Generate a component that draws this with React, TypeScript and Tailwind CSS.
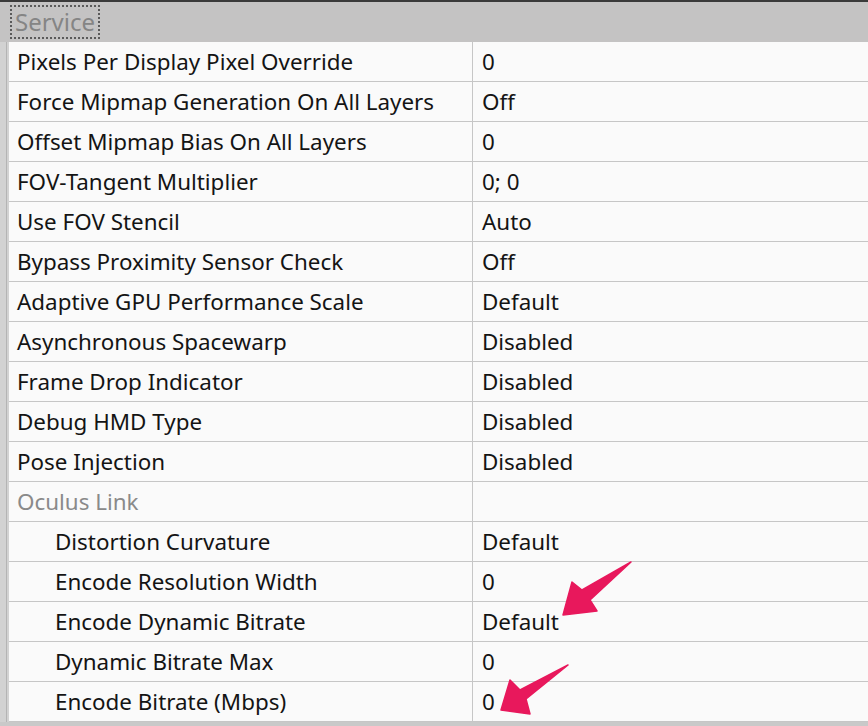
import React from 'react';

type Row = {
  label: string;
  value: string;
  indent?: boolean;
  category?: boolean;
};

const rows: Row[] = [
  { label: 'Pixels Per Display Pixel Override', value: '0' },
  { label: 'Force Mipmap Generation On All Layers', value: 'Off' },
  { label: 'Offset Mipmap Bias On All Layers', value: '0' },
  { label: 'FOV-Tangent Multiplier', value: '0; 0' },
  { label: 'Use FOV Stencil', value: 'Auto' },
  { label: 'Bypass Proximity Sensor Check', value: 'Off' },
  { label: 'Adaptive GPU Performance Scale', value: 'Default' },
  { label: 'Asynchronous Spacewarp', value: 'Disabled' },
  { label: 'Frame Drop Indicator', value: 'Disabled' },
  { label: 'Debug HMD Type', value: 'Disabled' },
  { label: 'Pose Injection', value: 'Disabled' },
  { label: 'Oculus Link', value: '', category: true },
  { label: 'Distortion Curvature', value: 'Default', indent: true },
  { label: 'Encode Resolution Width', value: '0', indent: true },
  { label: 'Encode Dynamic Bitrate', value: 'Default', indent: true },
  { label: 'Dynamic Bitrate Max', value: '0', indent: true },
  { label: 'Encode Bitrate (Mbps)', value: '0', indent: true },
];

function Arrow({ d }: { d: string }) {
  return <path d={d} fill="#e8185c" stroke="#e8185c" strokeWidth={1.5} strokeLinejoin="round" />;
}

export default function App() {
  return (
    <div
      className="relative w-[868px] h-[726px] overflow-hidden bg-[#c9c9c9] border-t-2 border-[#3a3a3a] text-[22.4px] text-[#141414]"
      style={{ fontFamily: '"Noto Sans", "Open Sans", sans-serif' }}
    >
      {/* Category header */}
      <div className="h-[40px] bg-[#c4c3c3] flex items-center pl-[10px]">
        <div className="h-[34px] px-[3px] flex items-center border-2 border-dotted border-[#5a5a5a] text-[#858585] text-[24px]">
          Service
        </div>
      </div>

      {/* Grid */}
      <div className="flex">
        <div className="w-[9px] bg-[#d2d2d2] flex justify-end pr-[2px]">
          <div className="w-[1px] bg-[#b4b4b4]" />
        </div>
        <div className="flex-1 flex flex-col bg-[#fafafa]">
          {rows.map((r) => (
            <div key={r.label} className="h-10 flex border-b border-[#c6c6c6]">
              <div
                className={
                  'w-[464px] border-r border-[#c6c6c6] flex items-center ' +
                  (r.indent ? 'pl-[46px]' : 'pl-[8px]') +
                  (r.category ? ' text-[#8a8a8a]' : '')
                }
              >
                {r.label}
              </div>
              <div className="flex-1 flex items-center pl-[9px]">{r.value}</div>
            </div>
          ))}
        </div>
      </div>

      {/* Annotation arrows */}
      <svg className="absolute left-0 top-0 pointer-events-none" width="868" height="726">
        <Arrow d="M631 560 L582 588 L572 580 L563 613 L597 609 L590 598 Z" />
        <Arrow d="M568 663 L520 688 L510 678 L501 708 L530 712 L526 697 Z" />
      </svg>
    </div>
  );
}
